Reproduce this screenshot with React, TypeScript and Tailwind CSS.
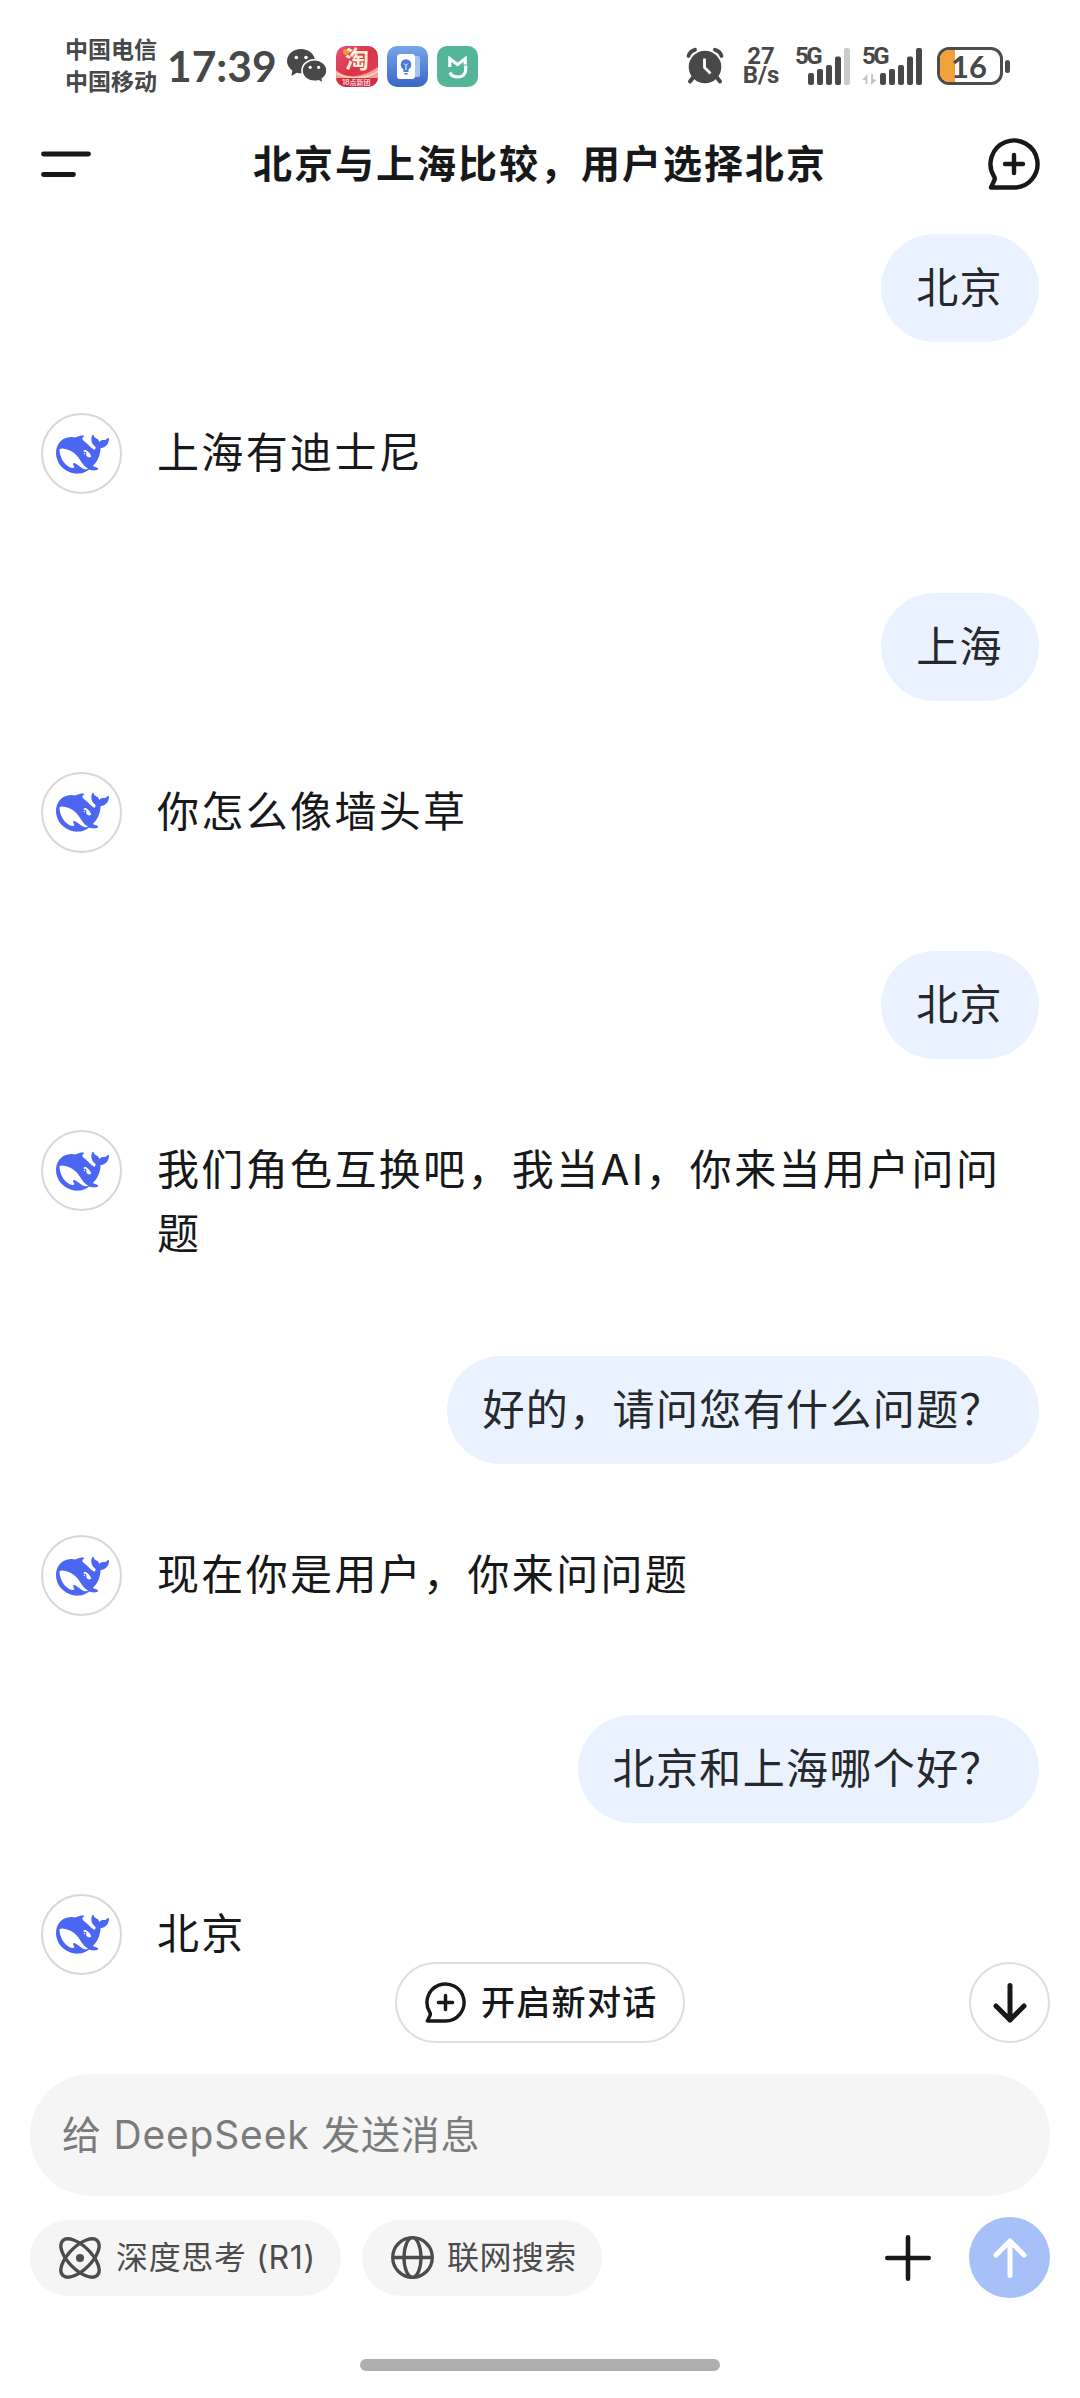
import React from "react";

const WHALE =
  "M23.748 4.482c-.254-.124-.364.113-.512.234-.051.039-.094.09-.137.136-.372.397-.806.657-1.373.626-.829-.046-1.537.214-2.163.848-.133-.782-.575-1.248-1.247-1.548-.352-.156-.708-.311-.955-.65-.172-.241-.219-.51-.305-.774-.055-.16-.11-.323-.293-.35-.2-.031-.278.136-.356.276-.313.572-.434 1.202-.422 1.84.027 1.436.633 2.58 1.838 3.393.137.093.172.187.129.323-.082.28-.18.552-.266.833-.055.179-.137.217-.329.14a5.526 5.526 0 01-1.736-1.18c-.857-.828-1.631-1.742-2.597-2.458a11.365 11.365 0 00-.689-.471c-.985-.957.13-1.743.388-1.836.27-.098.093-.432-.779-.428-.872.004-1.67.295-2.687.684a3.055 3.055 0 01-.465.137 9.597 9.597 0 00-2.883-.102c-1.885.21-3.39 1.102-4.497 2.623C.082 8.606-.231 10.684.152 12.85c.403 2.284 1.569 4.175 3.36 5.653 1.858 1.533 3.997 2.284 6.438 2.14 1.482-.085 3.133-.284 4.994-1.86.47.234.962.327 1.78.397.63.059 1.236-.03 1.705-.128.735-.156.684-.837.419-.961-2.155-1.004-1.682-.595-2.113-.926 1.096-1.296 2.746-2.642 3.392-7.003.05-.347.007-.565 0-.845-.004-.17.035-.237.23-.256a4.173 4.173 0 001.545-.475c1.396-.763 1.96-2.015 2.093-3.517.02-.23-.004-.467-.247-.588zM11.581 18c-2.089-1.642-3.102-2.183-3.52-2.16-.392.024-.321.471-.235.763.09.288.207.486.371.739.114.167.192.416-.113.603-.673.416-1.842-.14-1.897-.167-1.361-.802-2.5-1.86-3.301-3.307-.774-1.393-1.224-2.887-1.298-4.482-.02-.386.093-.522.477-.592a4.696 4.696 0 011.529-.039c2.132.312 3.946 1.265 5.468 2.774.868.86 1.525 1.887 2.202 2.891.72 1.066 1.494 2.082 2.48 2.914.348.292.625.514.891.677-.802.09-2.14.11-3.054-.614zm1-6.44a.306.306 0 01.415-.287.302.302 0 01.2.288.306.306 0 01-.31.307.303.303 0 01-.304-.308zm3.11 1.596c-.2.081-.399.151-.59.16a1.245 1.245 0 01-.798-.254c-.274-.23-.47-.358-.552-.758a1.73 1.73 0 01.016-.588c.07-.327-.008-.537-.239-.727-.187-.156-.426-.199-.688-.199a.559.559 0 01-.254-.078c-.11-.054-.2-.19-.114-.358.028-.054.16-.186.192-.21.356-.202.767-.136 1.146.016.352.144.618.408 1.001.782.391.451.462.576.685.914.176.265.336.537.445.848.067.195-.019.354-.25.452z";

type Message = { from: "user" | "ai"; text: string };

const messages: Message[] = [
  { from: "user", text: "北京" },
  { from: "ai", text: "上海有迪士尼" },
  { from: "user", text: "上海" },
  { from: "ai", text: "你怎么像墙头草" },
  { from: "user", text: "北京" },
  { from: "ai", text: "我们角色互换吧，我当AI，你来当用户问问题" },
  { from: "user", text: "好的，请问您有什么问题？" },
  { from: "ai", text: "现在你是用户，你来问问题" },
  { from: "user", text: "北京和上海哪个好？" },
  { from: "ai", text: "北京" },
];

function NewChatIcon({ className }: { className: string }) {
  return (
    <svg viewBox="0 0 52 52" className={className} fill="none" stroke="#17181a" strokeWidth="4.4" strokeLinejoin="round" strokeLinecap="round">
      <path d="M3 49.5H26A23.5 23.5 0 1 0 6 38.3Q7.4 40.6 6.3 42.4Z" />
      <path d="M26 17v18M17 26h18" />
    </svg>
  );
}

function WeChatIcon() {
  return (
    <svg viewBox="0 0 40 35" className="h-[35px] w-10">
      <g fill="#484848">
        <path d="M14 0C6.3 0 0 5.3 0 12c0 3.800 2 7.200 5.300 9.400L4.400 27l5.300-3.300c1.400.4 2.800.6 4.300.6C21.700 24.300 28 18.900 28 12S21.700 0 14 0Z" />
        <path stroke="#fff" strokeWidth="1.600" d="M27.500 10.800C20.600 10.800 15 15.600 15 21.600s5.600 10.800 12.500 10.800c1.500 0 2.900-.2 4.200-.6l4.400 2.600-.8-4.500c2.900-2 4.700-5 4.700-8.300 0-6-5.600-10.800-12.500-10.800Z" />
      </g>
      <g fill="#fff">
        <circle cx="9.300" cy="8.500" r="1.800" />
        <circle cx="19" cy="8.500" r="1.800" />
        <circle cx="23.200" cy="18.300" r="1.600" />
        <circle cx="31.600" cy="18.300" r="1.600" />
      </g>
    </svg>
  );
}

function TaobaoIcon() {
  return (
    <div className="relative ml-[9px] h-[41px] w-[42px] overflow-hidden rounded-[10px] bg-linear-to-br from-[#e8507a] via-[#dc3146] to-[#e0455c]">
      <svg viewBox="0 0 42 41" className="absolute inset-0 size-full">
        <circle cx="10" cy="6" r="3" fill="#f39a2c" />
        <path d="M0 24C10 34 28 31 42 21V34H0Z" fill="#f3a0a0" />
        <path d="M0 27C12 34 30 34 42 25" fill="none" stroke="#f9dca8" strokeWidth="1.500" />
        <path d="M0 32H42V41H0Z" fill="#d42c43" />
      </svg>
      <span className="absolute left-[9px] top-[2px] text-[24px] font-bold leading-[24px] text-[#fff3d6]">淘</span>
      <span className="absolute left-[6px] top-[32px] whitespace-nowrap text-[7px] font-bold leading-[9px] text-[#f8cdd2]">18点新团</span>
    </div>
  );
}

function NotesIcon() {
  return (
    <svg viewBox="0 0 41 41" className="ml-[9px] size-[41px]">
      <defs>
        <linearGradient id="notes" x1="0" y1="0" x2="0" y2="1">
          <stop offset="0" stopColor="#76a6e6" />
          <stop offset="1" stopColor="#3a66c8" />
        </linearGradient>
      </defs>
      <rect width="41" height="41" rx="10" fill="url(#notes)" />
      <rect x="24" y="10" width="9" height="21" rx="2" fill="#a5c3f0" />
      <rect x="10" y="8" width="18" height="25" rx="3" fill="#fff" />
      <circle cx="19" cy="18.500" r="5.300" fill="#4a7bd4" />
      <path d="M16.500 22h5v4h-5zM17.300 27h3.400v1.500h-3.400z" fill="#4a7bd4" />
      <path d="M17 17.500l2 2 2-2M19 19.500V24" stroke="#fff" strokeWidth="1" fill="none" />
    </svg>
  );
}

function MiHomeIcon() {
  return (
    <svg viewBox="0 0 41 41" className="ml-[9px] size-[41px]">
      <rect width="41" height="41" rx="10" fill="#53b698" />
      <g fill="none" stroke="#fff" strokeWidth="3.200">
        <path d="M12.800 21V12.800L20.500 18.500L28.200 12.800V18.500" />
        <path d="M28.700 19.500V23.500C28.700 28.200 25.500 31 20.800 31C17 31 14.200 29.500 12.900 26.500" />
      </g>
    </svg>
  );
}

function AlarmIcon() {
  return (
    <svg viewBox="0 0 38 38" className="h-[38px] w-[38px]">
      <circle cx="19" cy="20" r="16.300" fill="#484848" />
      <g fill="none" stroke="#484848" strokeLinecap="round" strokeWidth="4">
        <path d="M7.500 30L4 34.500M30.500 30L34 34.500" />
      </g>
      <path d="M1.500 12Q2 4 10.500 2.500M36.500 12Q36 4 27.500 2.500" fill="none" stroke="#fff" strokeWidth="7" />
      <path d="M2.500 9Q4 4 9 2.800M35.500 9Q34 4 29 2.800" fill="none" stroke="#484848" strokeWidth="3.800" strokeLinecap="round" />
      <path d="M18.500 11.500V20.500L24.500 26.500" fill="none" stroke="#fff" strokeWidth="2.800" />
    </svg>
  );
}

function Signal({ weak }: { weak?: boolean }) {
  return (
    <div className="relative h-[38px] w-[60px]">
      <span className="absolute left-0 top-0 font-[Roboto] text-[24px] font-bold leading-[19px] tracking-[-2.500px]">5G</span>
      <svg viewBox="0 0 60 38" className="absolute inset-0 size-full">
        <g fill="#484848">
          <rect x={weak ? 13 : 18} y="26" width="6" height="12" rx="2" />
          <rect x={weak ? 22 : 27} y="22" width="6" height="16" rx="2" />
          <rect x={weak ? 31 : 36} y="18" width="6" height="20" rx="2" />
          <rect x={weak ? 40 : 45} y="9.500" width="6" height="28.500" rx="2" />
          <rect x={weak ? 49 : 54} y="1" width="6" height="37" rx="2" fill={weak ? "#cbcbcb" : "#484848"} />
        </g>
        {!weak && <path d="M0 33L5.500 27V37H3.500V33ZM14.500 33L9 38V27H11V32Z" fill="#c4c4c4" />}
      </svg>
    </div>
  );
}

function Battery() {
  return (
    <div className="ml-[15px] flex h-[38px] items-center">
      <div className="relative flex h-[38px] w-[66px] items-center justify-center overflow-hidden rounded-[12px] border-3 border-[#4c4c4c] bg-white">
        <span className="absolute inset-y-0 left-0 w-[15px] bg-[#f0a13a]" />
        <span className="relative -left-px font-[Lato] text-[31px] font-bold leading-none text-[#484848]">16</span>
      </div>
      <span className="ml-[2px] h-[13px] w-[5px] rounded-[3px] bg-[#4c4c4c]" />
    </div>
  );
}

function StatusBar() {
  return (
    <div className="flex h-[132px] items-start pl-[65px] pr-[70px] text-[#484848]">
      <div className="mt-[34px] flex flex-col text-[23px] font-bold leading-[32px]">
        <span>中国电信</span>
        <span>中国移动</span>
      </div>
      <span className="ml-[10px] mt-[43px] w-[120px] font-[Lato] text-[42.500px] font-bold leading-[46px]">17:39</span>
      <div className="mt-[46px] flex items-center">
        <WeChatIcon />
        <TaobaoIcon />
        <NotesIcon />
        <MiHomeIcon />
      </div>
      <div className="ml-auto mt-[47px] flex items-start">
        <AlarmIcon />
        <div className="ml-[17px] flex w-[40px] flex-col items-center font-[Roboto] text-[24px] font-bold leading-[19px]">
          <span>27</span>
          <span>B/s</span>
        </div>
        <div className="ml-[14px] flex gap-[7px]">
          <Signal weak />
          <Signal />
        </div>
        <Battery />
      </div>
    </div>
  );
}

function Header() {
  return (
    <header className="flex h-[64px] items-center justify-between px-10">
      <svg viewBox="0 0 52 26" className="h-[26px] w-[52px]" stroke="#17181a" strokeWidth="4.800" strokeLinecap="round">
        <path d="M3.500 3H48.500M3.500 23.500H33.500" />
      </svg>
      <h1 className="text-[39px] font-bold leading-[60px] tracking-[2px] text-[#17181a]">北京与上海比较，用户选择北京</h1>
      <NewChatIcon className="size-[52px]" />
    </header>
  );
}

function UserMessage({ text }: { text: string }) {
  return (
    <div className="mb-[71px] flex justify-end">
      <div className="flex h-[108px] items-center rounded-[54px] bg-[#ebf2ff] pl-[35px] pr-[36px] text-[42px] leading-[64px] tracking-[1.380px] text-[#26282c]">
        {text}
      </div>
    </div>
  );
}

function AiMessage({ text }: { text: string }) {
  return (
    <div className="mb-[90px] flex min-h-[89.500px] items-start">
      <div className="flex size-[81px] shrink-0 items-center justify-center rounded-full border-[2.500px] border-[#d8d8d8]">
        <svg viewBox="0 0 24 24" className="ml-px mt-px size-[53px]" fill="#4a66f2">
          <path d={WHALE} />
        </svg>
      </div>
      <p className="ml-[35px] w-[850px] pt-[8px] text-[42px] leading-[64px] tracking-[2.350px] text-[#17181a]">{text}</p>
    </div>
  );
}

function Composer() {
  return (
    <footer className="px-[30px]">
      <div className="flex h-[122px] items-center rounded-full bg-[#f5f5f5] px-8 text-[39px] tracking-[0.800px] text-[#7b7b7b]">给 DeepSeek 发送消息</div>
      <div className="mt-[21px] flex h-[81px] items-center text-[32px] text-[#4c4c4c]">
        <div className="flex h-[76px] w-[311px] items-center rounded-full bg-[#f5f5f5] pl-[29px]">
          <svg viewBox="0 0 42 42" className="size-[42px]" fill="none" stroke="#4c4c4c" strokeWidth="3.400">
            <ellipse cx="21" cy="21" rx="24.500" ry="11.500" transform="rotate(45 21 21)" />
            <ellipse cx="21" cy="21" rx="24.500" ry="11.500" transform="rotate(-45 21 21)" />
            <circle cx="21" cy="21" r="4" fill="#4c4c4c" stroke="none" />
          </svg>
          <span className="ml-[15px] whitespace-nowrap tracking-[0.650px]">深度思考 (R1)</span>
        </div>
        <div className="ml-[21px] flex h-[76px] w-[240px] items-center rounded-full bg-[#f5f5f5] pl-[29px]">
          <svg viewBox="0 0 43 43" className="size-[43px]" fill="none" stroke="#4c4c4c" strokeWidth="3.300">
            <circle cx="21.500" cy="21.500" r="19.800" />
            <ellipse cx="21.500" cy="21.500" rx="8.500" ry="19.800" />
            <path d="M1.500 21.500h40" />
          </svg>
          <span className="ml-[13px] whitespace-nowrap tracking-[0.400px]">联网搜索</span>
        </div>
        <svg viewBox="0 0 46 46" className="ml-auto size-[46px]" stroke="#17181a" strokeWidth="4.600" strokeLinecap="round">
          <path d="M23 2.300V43.700M2.300 23H43.700" />
        </svg>
        <div className="ml-[38px] flex size-[81px] items-center justify-center rounded-full bg-[#a6c0f8]">
          <svg viewBox="0 0 34 40" className="h-10 w-[34px]" fill="none" stroke="#fff" strokeWidth="5" strokeLinecap="round" strokeLinejoin="round">
            <path d="M17 37.500V3M3 17L17 3L31 17" />
          </svg>
        </div>
      </div>
    </footer>
  );
}

export default function App() {
  return (
    <div lang="zh-CN" className="flex h-[2398px] w-[1080px] flex-col bg-white font-[Inter,'Noto_Sans_CJK_SC',sans-serif]">
      <StatusBar />
      <Header />
      <div className="relative h-[1878px] shrink-0">
        <main className="flex h-full flex-col overflow-hidden pl-[41px] pr-[41px] pt-[38px]">
          {messages.map((m, i) => (m.from === "user" ? <UserMessage key={i} text={m.text} /> : <AiMessage key={i} text={m.text} />))}
        </main>
        <div className="absolute bottom-[31px] left-[395px] flex h-[81px] w-[290px] items-center rounded-full border-2 border-[#dedede] bg-white pl-[28px]">
          <NewChatIcon className="size-[41px]" />
          <span className="ml-[15px] whitespace-nowrap text-[34px] font-medium tracking-[1.300px] text-[#17181a]">开启新对话</span>
        </div>
        <div className="absolute bottom-[31px] right-[30px] flex size-[81px] items-center justify-center rounded-full border-2 border-[#dedede] bg-white">
          <svg viewBox="0 0 34 40" className="h-10 w-[34px]" fill="none" stroke="#17181a" strokeWidth="5" strokeLinecap="round" strokeLinejoin="round">
            <path d="M17 2.500V37M3 23L17 37L31 23" />
          </svg>
        </div>
      </div>
      <Composer />
      <div className="mx-auto mt-[61px] h-[12px] w-[360px] rounded-full bg-[#aeaeae]" />
    </div>
  );
}
